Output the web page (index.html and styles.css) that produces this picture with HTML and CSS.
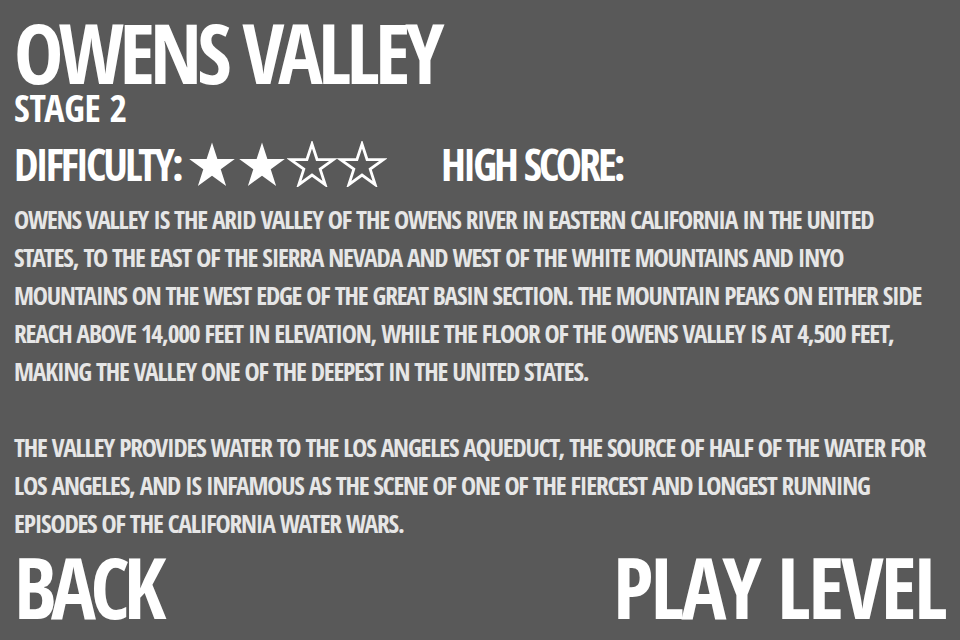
FILE: index.html
```html
<!DOCTYPE html>
<html>
<head>
<meta charset="utf-8">
<title>Owens Valley - Stage 2</title>
<link rel="stylesheet" href="styles.css">
</head>
<body>
<main class="screen">
  <header class="head">
    <h1 class="title">OWENS VALLEY</h1>
    <div class="stage">STAGE 2</div>
    <div class="meta">
      <div class="difficulty">
        <span class="label">DIFFICULTY:</span>
        <span class="stars">
          <svg class="star" viewBox="-25 -25.5 50 46"><polygon class="full" points="0,-24 5.39,-7.42 22.83,-7.42 8.72,2.83 14.11,19.42 0,9.17 -14.11,19.42 -8.72,2.83 -22.83,-7.42 -5.39,-7.42"/></svg>
          <svg class="star" viewBox="-25 -25.5 50 46"><polygon class="full" points="0,-24 5.39,-7.42 22.83,-7.42 8.72,2.83 14.11,19.42 0,9.17 -14.11,19.42 -8.72,2.83 -22.83,-7.42 -5.39,-7.42"/></svg>
          <svg class="star" viewBox="-25 -25.5 50 46"><polygon class="empty" points="0,-22.5 5.05,-6.95 21.4,-6.95 8.17,2.65 13.22,18.2 0,8.6 -13.22,18.2 -8.17,2.65 -21.4,-6.95 -5.05,-6.95"/></svg>
          <svg class="star" viewBox="-25 -25.5 50 46"><polygon class="empty" points="0,-22.5 5.05,-6.95 21.4,-6.95 8.17,2.65 13.22,18.2 0,8.6 -13.22,18.2 -8.17,2.65 -21.4,-6.95 -5.05,-6.95"/></svg>
        </span>
      </div>
      <span class="label">HIGH SCORE:</span>
    </div>
  </header>
  <section class="desc">
    <p>OWENS VALLEY IS THE ARID VALLEY OF THE OWENS RIVER IN EASTERN CALIFORNIA IN THE UNITED<br>STATES, TO THE EAST OF THE SIERRA NEVADA AND WEST OF THE WHITE MOUNTAINS AND INYO<br>MOUNTAINS ON THE WEST EDGE OF THE GREAT BASIN SECTION. THE MOUNTAIN PEAKS ON EITHER SIDE<br>REACH ABOVE 14,000 FEET IN ELEVATION, WHILE THE FLOOR OF THE OWENS VALLEY IS AT 4,500 FEET,<br>MAKING THE VALLEY ONE OF THE DEEPEST IN THE UNITED STATES.</p>
    <p>THE VALLEY PROVIDES WATER TO THE LOS ANGELES AQUEDUCT, THE SOURCE OF HALF OF THE WATER FOR<br>LOS ANGELES, AND IS INFAMOUS AS THE SCENE OF ONE OF THE FIERCEST AND LONGEST RUNNING<br>EPISODES OF THE CALIFORNIA WATER WARS.</p>
  </section>
  <footer class="actions">
    <a class="btn btn-back" href="#">BACK</a>
    <a class="btn btn-play" href="#">PLAY LEVEL</a>
  </footer>
</main>
</body>
</html>
```
FILE: styles.css
```css
html, body {
  margin: 0;
  padding: 0;
  background: #595959;
}
.screen {
  width: 960px;
  height: 640px;
  box-sizing: border-box;
  padding: 14px 15px 0 14px;
  display: flex;
  flex-direction: column;
  font-family: "Open Sans Condensed", "Roboto Condensed", "Liberation Sans Narrow", sans-serif;
  font-weight: 700;
  color: #ffffff;
}
.head {
  display: flex;
  flex-direction: column;
}
.title {
  margin: 0;
  font-size: 83px;
  line-height: 76px;
  letter-spacing: -4.8px;
  font-weight: 700;
  white-space: nowrap;
}
.stage {
  margin-top: 1px;
  font-size: 38px;
  line-height: 32px;
  letter-spacing: -0.3px;
}
.meta {
  margin-top: 18px;
  display: flex;
  align-items: center;
  height: 46px;
}
.difficulty {
  display: flex;
  align-items: center;
  width: 427px;
}
.label {
  font-size: 44px;
  line-height: 44px;
  letter-spacing: -3px;
  white-space: nowrap;
}
.stars {
  display: flex;
  margin-left: 6px;
}
.star {
  width: 50px;
  height: 46px;
  display: block;
}
.star .full {
  fill: #ffffff;
}
.star .empty {
  fill: none;
  stroke: #ffffff;
  stroke-width: 2.8;
  stroke-linejoin: miter;
}
.desc {
  margin-top: 13px;
  color: #e6e6e6;
  font-size: 25.5px;
  line-height: 38px;
  letter-spacing: -1.2px;
  white-space: nowrap;
}
.desc p {
  margin: 0 0 38px 0;
}
.desc p:last-child {
  margin-bottom: 0;
}
.actions {
  margin-top: 4px;
  display: flex;
  justify-content: space-between;
  align-items: flex-start;
}
.btn {
  color: #ffffff;
  text-decoration: none;
  font-size: 84px;
  line-height: 82px;
  white-space: nowrap;
}
.btn-back {
  letter-spacing: -5.5px;
}
.btn-play {
  letter-spacing: -2.7px;
}
```
